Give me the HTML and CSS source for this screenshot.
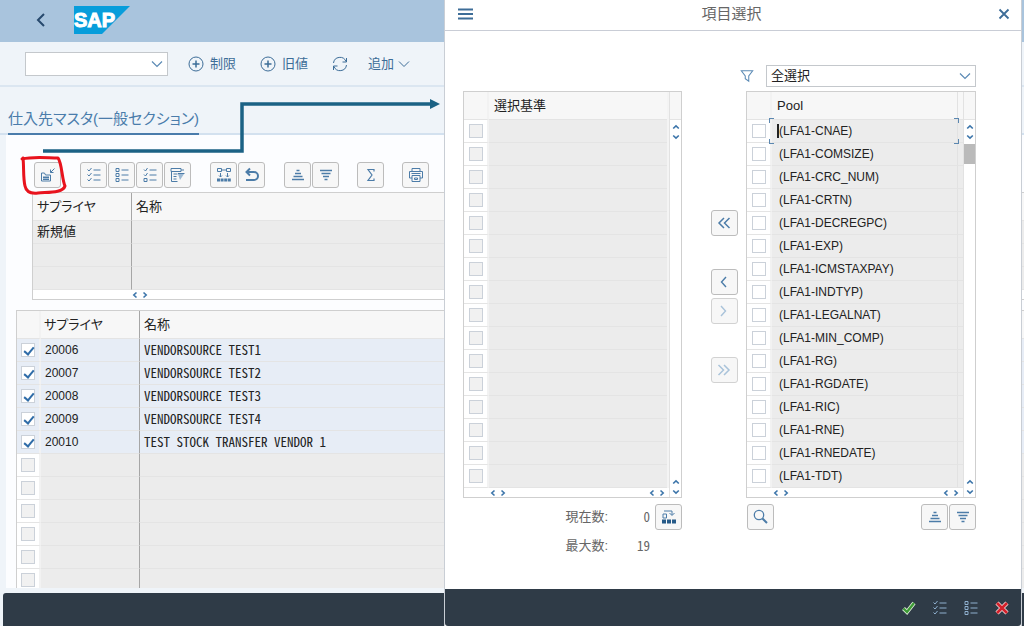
FILE: index.html
```html
<!DOCTYPE html>
<html lang="ja">
<head>
<meta charset="utf-8">
<title>項目選択</title>
<link rel="stylesheet" href="styles.css">
</head>
<body>
<svg class="defs" aria-hidden="true">
  <symbol id="down" viewBox="0 0 12 8"><path d="M1 1.5 6 6.5 11 1.5"/></symbol>
  <symbol id="s-left" viewBox="0 0 6 8"><path d="M4.5 1.5 1.8 4 4.5 6.5" stroke-width="1.6"/></symbol>
  <symbol id="s-right" viewBox="0 0 6 8"><path d="M1.5 1.5 4.2 4 1.5 6.5" stroke-width="1.6"/></symbol>
  <symbol id="s-up" viewBox="0 0 8 6"><path d="M1.2 4.5 4 1.8 6.8 4.5" stroke-width="1.6"/></symbol>
  <symbol id="s-down" viewBox="0 0 8 6"><path d="M1.2 1.5 4 4.2 6.8 1.5" stroke-width="1.6"/></symbol>
  <symbol id="plus" viewBox="0 0 16 16"><circle cx="8" cy="8" r="7"/><path d="M8 4.500v7M4.500 8h7" stroke-width="1.500"/></symbol>
  <symbol id="checks" viewBox="0 0 16 16"><path d="M1.500 2.500 3 4 5.500 1M1.500 7.500 3 9 5.500 6M1.500 12.500 3 14 5.500 11M7.500 3h7M7.500 8h7M7.500 13h7"/></symbol>
  <symbol id="boxes" viewBox="0 0 16 16"><path d="M2 1.500h3v3H2zM2 6.500h3v3H2zM2 11.500h3v3H2zM7.500 3h7M7.500 8h7M7.500 13h7"/></symbol>
  <symbol id="asc" viewBox="0 0 16 16"><path d="M6.500 3.500h3M5 6.500h6M3.500 9.500h9M2 12.500h12" stroke-width="1.500"/></symbol>
  <symbol id="desc" viewBox="0 0 16 16"><path d="M2 3.500h12M3.500 6.500h9M5 9.500h6M6.500 12.500h3" stroke-width="1.500"/></symbol>
</svg>

<div class="app">
  <header class="shell">
    <button class="plain back" aria-label="戻る"><svg class="ic" viewBox="0 0 16 16"><path d="M11 2 5 8 11 14" stroke-width="2"/></svg></button>
    <svg class="logo" viewBox="0 0 56 28" role="img" aria-label="SAP"><path d="M0 0H56L28 28H0Z" fill="#079ddb" stroke="none"/><text x="0" y="21">SAP</text></svg>
  </header>
  <div class="toolbar">
    <select class="cmd" aria-label="コマンド"><option></option></select>
    <button class="plain"><svg class="ic"><use href="#plus"/></svg>制限</button>
    <button class="plain second"><svg class="ic"><use href="#plus"/></svg>旧値</button>
    <button class="plain second" aria-label="更新"><svg class="ic" viewBox="0 0 16 16"><path d="M1.500 7A6.500 6.500 0 0 1 14 5.500M14.500 2v4h-4M14.500 9A6.500 6.500 0 0 1 2 10.500M1.500 14v-4h4"/></svg></button>
    <button class="plain more">追加<svg class="chev"><use href="#down"/></svg></button>
  </div>
  <nav class="tabs"><a class="tab" href="#master">仕入先マスタ(一般セクション)</a></nav>
  <main class="panel" id="master">
    <div class="actions">
      <button class="btn" aria-label="項目選択"><svg class="ic" viewBox="0 0 16 16"><path d="M1.500 6h3l1 2h5v6h-9zM3 10h6M3 12h6"/><path d="M3 10.500h6M3 12.500h6"/><path d="M14.500 1.500 10.500 5.500M10.500 2.500v3h3"/></svg></button>
      <div class="group"><button class="btn" aria-label="全選択"><svg class="ic"><use href="#checks"/></svg></button><button class="btn" aria-label="選択解除"><svg class="ic"><use href="#boxes"/></svg></button><button class="btn" aria-label="ブロック選択"><svg class="ic" viewBox="0 0 16 16"><path d="M2 2.500 3.500 4 5.500 1M2 7.500 3.500 9 5.500 6M2 11.500h3v3H2zM7.500 3h7M7.500 8h7M7.500 13h7"/></svg></button><button class="btn" aria-label="詳細"><svg class="ic" viewBox="0 0 16 16"><path d="M1 1.500h10v3H1zM1.500 4.500v10h6M3.500 7h4M3.500 9.500h3M3.500 12h3M11 3h3"/><path d="M8 7h6l-4 6z" fill="#9db9d3" stroke="none"/><path d="M8 6.500h6.500"/></svg></button></div>
      <div class="group"><button class="btn" aria-label="一括変更"><svg class="ic" viewBox="0 0 16 16"><path d="M1.500 1.500h4v3h-4zM10.500 1.500h4v3h-4zM6 3h4M4.500 6v4M11.500 6v4M3 8.500 4.500 10 6 8.500M10 8.500 11.500 10 13 8.500"/><path d="M1 13h14" stroke-width="3" stroke-dasharray="3 .6"/></svg></button><button class="btn" aria-label="元に戻す"><svg class="ic" viewBox="0 0 16 16"><path d="M6 1.500 2.500 5 6 8.500M3 5h7a4 4 0 0 1 0 8H2" stroke-width="2"/></svg></button></div>
      <div class="group"><button class="btn" aria-label="昇順"><svg class="ic"><use href="#asc"/></svg></button><button class="btn" aria-label="降順"><svg class="ic"><use href="#desc"/></svg></button></div>
      <button class="btn" aria-label="合計"><svg class="ic" viewBox="0 0 16 16"><path d="M11 4.500v-2H5L9 8l-4 5.500h6v-2" stroke-width="1.200"/></svg></button>
      <button class="btn" aria-label="印刷"><svg class="ic" viewBox="0 0 16 16"><path d="M4 4.500v-3h8v3M4 11H1.500V4.500h13V11H12M4 8.500h8v6H4zM3.500 6.500h9M6.500 11h3v1.500h-3z"/></svg></button>
    </div>
    <section class="block">
      <table class="data first">
        <thead><tr><th class="id">サプライヤ</th><th>名称</th></tr></thead>
        <tbody><tr><td class="id">新規値</td><td></td></tr><tr><td class="id"></td><td></td></tr><tr><td class="id"></td><td></td></tr></tbody>
      </table>
      <div class="hbar"><svg class="h"><use href="#s-left"/></svg><svg class="h"><use href="#s-right"/></svg></div>
    </section>
    <table class="data list">
      <thead><tr><th class="ck"></th><th class="id">サプライヤ</th><th>名称</th></tr></thead>
      <tbody>
        <tr class="on"><td class="ck"><input type="checkbox" checked aria-label="20006"></td><td class="id">20006</td><td class="mono">VENDORSOURCE TEST1</td></tr>
        <tr class="on"><td class="ck"><input type="checkbox" checked aria-label="20007"></td><td class="id">20007</td><td class="mono">VENDORSOURCE TEST2</td></tr>
        <tr class="on"><td class="ck"><input type="checkbox" checked aria-label="20008"></td><td class="id">20008</td><td class="mono">VENDORSOURCE TEST3</td></tr>
        <tr class="on"><td class="ck"><input type="checkbox" checked aria-label="20009"></td><td class="id">20009</td><td class="mono">VENDORSOURCE TEST4</td></tr>
        <tr class="on"><td class="ck"><input type="checkbox" checked aria-label="20010"></td><td class="id">20010</td><td class="mono">TEST STOCK TRANSFER VENDOR 1</td></tr>
        <tr><td class="ck"><input type="checkbox" disabled aria-label="空行"></td><td class="id"></td><td></td></tr>
        <tr><td class="ck"><input type="checkbox" disabled aria-label="空行"></td><td class="id"></td><td></td></tr>
        <tr><td class="ck"><input type="checkbox" disabled aria-label="空行"></td><td class="id"></td><td></td></tr>
        <tr><td class="ck"><input type="checkbox" disabled aria-label="空行"></td><td class="id"></td><td></td></tr>
        <tr><td class="ck"><input type="checkbox" disabled aria-label="空行"></td><td class="id"></td><td></td></tr>
        <tr><td class="ck"><input type="checkbox" disabled aria-label="空行"></td><td class="id"></td><td></td></tr>
      </tbody>
    </table>
  </main>
  <footer class="foot"></footer>
  <svg class="notes" viewBox="0 0 444 200" aria-hidden="true">
    <path d="M43 151H242V104H431" fill="none" stroke="#1b6285" stroke-width="3.500"/><path d="M430 99 440 104 430 109Z" fill="#1b6285"/>
    <path d="M22 159C34 156 48 158 58 158C62 163 62 180 65 186C63 193 48 192 38 193C30 194 26 191 25 186C23 178 24 166 23 158" fill="none" stroke="#e8131d" stroke-width="3" stroke-linecap="round" stroke-linejoin="round"/>
  </svg>
</div>

<div class="dialog" role="dialog" aria-labelledby="ttl">
  <header class="dhead">
    <button class="plain" aria-label="メニュー"><svg class="ic" viewBox="0 0 16 16"><path d="M1 3.500h15M1 8h15M1 12.500h15" stroke-width="1.800"/></svg></button>
    <h1 id="ttl">項目選択</h1>
    <button class="plain" aria-label="閉じる"><svg class="ic" viewBox="0 0 16 16"><path d="M3.500 3.500l9 9M12.500 3.500l-9 9" stroke-width="1.800"/></svg></button>
  </header>
  <div class="dbody">
    <section class="chosen">
      <div class="grid">
        <table class="data">
          <thead><tr><th class="ck"></th><th>選択基準</th></tr></thead>
          <tbody>
            <tr><td class="ck"><input type="checkbox" disabled aria-label="行1"></td><td></td></tr>
            <tr><td class="ck"><input type="checkbox" disabled aria-label="行2"></td><td></td></tr>
            <tr><td class="ck"><input type="checkbox" disabled aria-label="行3"></td><td></td></tr>
            <tr><td class="ck"><input type="checkbox" disabled aria-label="行4"></td><td></td></tr>
            <tr><td class="ck"><input type="checkbox" disabled aria-label="行5"></td><td></td></tr>
            <tr><td class="ck"><input type="checkbox" disabled aria-label="行6"></td><td></td></tr>
            <tr><td class="ck"><input type="checkbox" disabled aria-label="行7"></td><td></td></tr>
            <tr><td class="ck"><input type="checkbox" disabled aria-label="行8"></td><td></td></tr>
            <tr><td class="ck"><input type="checkbox" disabled aria-label="行9"></td><td></td></tr>
            <tr><td class="ck"><input type="checkbox" disabled aria-label="行10"></td><td></td></tr>
            <tr><td class="ck"><input type="checkbox" disabled aria-label="行11"></td><td></td></tr>
            <tr><td class="ck"><input type="checkbox" disabled aria-label="行12"></td><td></td></tr>
            <tr><td class="ck"><input type="checkbox" disabled aria-label="行13"></td><td></td></tr>
            <tr><td class="ck"><input type="checkbox" disabled aria-label="行14"></td><td></td></tr>
            <tr><td class="ck"><input type="checkbox" disabled aria-label="行15"></td><td></td></tr>
            <tr><td class="ck"><input type="checkbox" disabled aria-label="行16"></td><td></td></tr>
          </tbody>
        </table>
        <div class="vbar"><svg class="v"><use href="#s-up"/></svg><svg class="v"><use href="#s-down"/></svg><svg class="v end"><use href="#s-up"/></svg><svg class="v"><use href="#s-down"/></svg></div>
        <div class="hbar"><svg class="h"><use href="#s-left"/></svg><svg class="h"><use href="#s-right"/></svg><svg class="h end"><use href="#s-left"/></svg><svg class="h"><use href="#s-right"/></svg></div>
      </div>
      <dl class="counts">
        <dt>現在数:</dt><dd>0</dd><dd><button class="btn" aria-label="集計"><svg class="ic" viewBox="0 0 16 16"><path d="M2 5h3.500v4H2zM3 2h8v4M8.500 4 11 6.500 13.500 4"/><path d="M1 12.500h4M6 12.500h4M11 12.500h4" stroke-width="4" stroke="#265a88"/></svg></button></dd>
        <dt>最大数:</dt><dd>19</dd>
      </dl>
    </section>
    <div class="moves">
      <button class="btn" aria-label="すべて追加"><svg class="ic" viewBox="0 0 16 16"><path d="M7 3 2 8l5 5M12.500 3l-5 5 5 5" stroke-width="1.500"/></svg></button>
      <button class="btn one" aria-label="追加"><svg class="ic" viewBox="0 0 16 16"><path d="M9 3 4.500 8 9 13" stroke-width="1.400"/></svg></button>
      <button class="btn" disabled aria-label="削除"><svg class="ic" viewBox="0 0 16 16"><path d="M4 3l4.500 5L4 13" stroke-width="1.400"/></svg></button>
      <button class="btn all" disabled aria-label="すべて削除"><svg class="ic" viewBox="0 0 16 16"><path d="M1.500 3l5 5-5 5M7 3l5 5-5 5" stroke-width="1.500"/></svg></button>
    </div>
    <section class="pool">
      <div class="filter">
        <svg class="ic" viewBox="0 0 16 16"><path d="M1.500 2h13L10 8v6l-4-3V8z" stroke-width="1.200"/></svg>
        <select aria-label="フィルタ"><option>全選択</option></select>
      </div>
      <div class="grid">
        <table class="data">
          <thead><tr><th class="ck"></th><th>Pool</th><th class="edge"></th></tr></thead>
          <tbody>
            <tr><td class="ck"><input type="checkbox" id="p1"></td><td class="focus"><label for="p1">(LFA1-CNAE)</label></td><td class="edge"></td></tr>
            <tr><td class="ck"><input type="checkbox" id="p2"></td><td><label for="p2">(LFA1-COMSIZE)</label></td><td class="edge"></td></tr>
            <tr><td class="ck"><input type="checkbox" id="p3"></td><td><label for="p3">(LFA1-CRC_NUM)</label></td><td class="edge"></td></tr>
            <tr><td class="ck"><input type="checkbox" id="p4"></td><td><label for="p4">(LFA1-CRTN)</label></td><td class="edge"></td></tr>
            <tr><td class="ck"><input type="checkbox" id="p5"></td><td><label for="p5">(LFA1-DECREGPC)</label></td><td class="edge"></td></tr>
            <tr><td class="ck"><input type="checkbox" id="p6"></td><td><label for="p6">(LFA1-EXP)</label></td><td class="edge"></td></tr>
            <tr><td class="ck"><input type="checkbox" id="p7"></td><td><label for="p7">(LFA1-ICMSTAXPAY)</label></td><td class="edge"></td></tr>
            <tr><td class="ck"><input type="checkbox" id="p8"></td><td><label for="p8">(LFA1-INDTYP)</label></td><td class="edge"></td></tr>
            <tr><td class="ck"><input type="checkbox" id="p9"></td><td><label for="p9">(LFA1-LEGALNAT)</label></td><td class="edge"></td></tr>
            <tr><td class="ck"><input type="checkbox" id="p10"></td><td><label for="p10">(LFA1-MIN_COMP)</label></td><td class="edge"></td></tr>
            <tr><td class="ck"><input type="checkbox" id="p11"></td><td><label for="p11">(LFA1-RG)</label></td><td class="edge"></td></tr>
            <tr><td class="ck"><input type="checkbox" id="p12"></td><td><label for="p12">(LFA1-RGDATE)</label></td><td class="edge"></td></tr>
            <tr><td class="ck"><input type="checkbox" id="p13"></td><td><label for="p13">(LFA1-RIC)</label></td><td class="edge"></td></tr>
            <tr><td class="ck"><input type="checkbox" id="p14"></td><td><label for="p14">(LFA1-RNE)</label></td><td class="edge"></td></tr>
            <tr><td class="ck"><input type="checkbox" id="p15"></td><td><label for="p15">(LFA1-RNEDATE)</label></td><td class="edge"></td></tr>
            <tr><td class="ck"><input type="checkbox" id="p16"></td><td><label for="p16">(LFA1-TDT)</label></td><td class="edge"></td></tr>
          </tbody>
        </table>
        <div class="vbar"><svg class="v"><use href="#s-up"/></svg><svg class="v"><use href="#s-down"/></svg><span class="thumb"></span><svg class="v end"><use href="#s-up"/></svg><svg class="v"><use href="#s-down"/></svg></div>
        <div class="hbar"><svg class="h"><use href="#s-left"/></svg><svg class="h"><use href="#s-right"/></svg><svg class="h end"><use href="#s-left"/></svg><svg class="h"><use href="#s-right"/></svg></div>
      </div>
      <div class="tools">
        <button class="btn" aria-label="検索"><svg class="ic" viewBox="0 0 16 16"><circle cx="6" cy="6" r="4.700" stroke-width="1.300"/><path d="M9.500 9.500l4.500 4.500" stroke-width="2"/></svg></button>
        <div class="group"><button class="btn" aria-label="昇順"><svg class="ic"><use href="#asc"/></svg></button><button class="btn" aria-label="降順"><svg class="ic"><use href="#desc"/></svg></button></div>
      </div>
    </section>
  </div>
  <footer class="dfoot">
    <button class="plain" aria-label="確定"><svg class="ic" viewBox="0 0 16 16"><path d="M2.500 8.500 6 12 13 3" stroke="#dfeed9" stroke-width="4"/><path d="M2.500 8.500 6 12 13 3" stroke="#3c9a35" stroke-width="2.400"/></svg></button>
    <button class="plain" aria-label="全選択"><svg class="ic"><use href="#checks"/></svg></button>
    <button class="plain" aria-label="選択解除"><svg class="ic"><use href="#boxes"/></svg></button>
    <button class="plain" aria-label="中止"><svg class="ic" viewBox="0 0 16 16"><path d="M3 3l10 10M13 3 3 13" stroke="#f3dada" stroke-width="4.400"/><path d="M3 3l10 10M13 3 3 13" stroke="#d3202a" stroke-width="2.800"/></svg></button>
  </footer>
</div>
</body>
</html>
```
FILE: styles.css
```css
* { box-sizing: border-box; }
html, body { height: 100%; }
body {
  margin: 0;
  position: relative;
  overflow: hidden;
  background: #eff4f9;
  color: #333;
  font: 13px/20px "Liberation Sans", "Noto Sans CJK JP", sans-serif;
  font-feature-settings: "palt";
}
button, select { font: inherit; font-feature-settings: inherit; color: inherit; }
.defs { position: absolute; width: 0; height: 0; }
svg { fill: none; stroke: currentColor; flex: none; display: block; }
.ic { width: 16px; height: 16px; }
.plain {
  display: flex; align-items: center; gap: 6px;
  padding: 0; border: 0; background: none; color: #3d6d98;
  white-space: nowrap;
}
.btn {
  display: flex; align-items: center; justify-content: center;
  width: 27px; height: 26px; padding: 0;
  border: 1px solid #bcbcbc; border-radius: 3px;
  background: #f7f7f7; color: #4c7ca8;
}
.btn:disabled { border-color: #d2d2d2; color: #a9c3da; }
.group { display: flex; gap: 1px; }

/* Main window */
.app { height: 100%; display: flex; flex-direction: column; position: relative; }
.shell {
  display: flex; align-items: center; gap: 25px;
  height: 42px; padding: 0 33px 3px; flex: none;
  background: #a9c4dd;
}
.back { color: #27496d; }
.logo { width: 56px; height: 28px; }
.logo text { font: bold 20px "Liberation Sans", sans-serif; fill: #fff; stroke: #fff; stroke-width: 1px; }
.toolbar {
  display: flex; align-items: center; gap: 20px;
  height: 45px; padding: 0 25px; flex: none;
  border-bottom: 2px solid #dbe6f1;
}
.second { margin-left: 4px; }
.more { gap: 4px; }
.chev { width: 12px; height: 8px; }
select {
  appearance: none; border: 1px solid #c4c8cc; border-radius: 0;
  padding: 0 20px 0 4px; color: #222;
  background: #fff url("data:image/svg+xml,%3Csvg xmlns='http://www.w3.org/2000/svg' width='12' height='8'%3E%3Cpath d='M1 1.500 6 6.500 11 1.500' fill='none' stroke='%235b8ab5' stroke-width='1.200'/%3E%3C/svg%3E") no-repeat right 4px center;
}
.cmd { width: 143px; height: 24px; }
.tabs {
  display: flex; align-items: flex-end; flex: none;
  height: 48px; padding-left: 8px;
  box-shadow: inset 0 -2px #d3e1ef;
}
.tab {
  padding-bottom: 3px; border-bottom: 2px solid #4a7cab;
  color: #4a7cab; font-size: 15px; line-height: 22px; text-decoration: none;
}
.panel {
  flex: 1; min-height: 0; overflow: hidden;
  margin-left: 6px; padding: 27px 0 0 10px; background: #fcfdff;
}
.actions { display: flex; gap: 18px; padding-left: 18px; }
.actions .group { padding-left: 1px; }
.block { margin: 4px 0 10px 16px; border: 1px solid #cfcfcf; border-right: 0; background: #fff; }

.data { width: 100%; border-collapse: separate; border-spacing: 0; table-layout: fixed; }
.data th {
  height: 28px; padding: 0 4px; text-align: left; font-weight: 400;
  background: #f7f7f7; color: #222; border-bottom: 1px solid #e4e4e4;
}
.data td {
  height: 23px; padding: 0 4px; line-height: 18px;
  background: #ececec; border-bottom: 1px solid #e4e4e4; color: #222;
}
.app .id { width: 99px; border-right: 1px solid #a6a6a6; }
.list { border: 1px solid #cfcfcf; border-right: 0; border-bottom: 0; }
.list .id { font-size: 12px; }
.list th.id { font-size: 13px; padding-left: 3px; }
.data .ck { width: 24px; padding: 0 0 0 4px; border-right: 2px solid #f2f2f2; }
.data td.ck { background: #fff; }
.data .on td { background: #e7edf6; }
.mono { font-family: "Noto Sans CJK JP", sans-serif; font-feature-settings: "hwid"; }
input[type="checkbox"] {
  appearance: none; display: block; position: relative;
  width: 14px; height: 14px; margin: 0;
  border: 1px solid #cbd1d9; background: #fff;
}
input:disabled { background: #f1f1f1; }
input:checked::after {
  content: ""; position: absolute; left: 4px; top: 1px;
  width: 4px; height: 8px; transform: rotate(40deg);
  border: solid #2f6ca8; border-width: 0 2px 2px 0;
}
.hbar { display: flex; align-items: center; gap: 4px; height: 9px; padding-left: 99px; color: #3c75aa; }
.h { width: 6px; height: 8px; }
.v { width: 8px; height: 6px; }
.foot { flex: none; height: 33px; margin: 5px 0 0 3px; background: #2f3b47; border-top-left-radius: 3px; }
.notes { position: absolute; left: 0; top: 0; width: 444px; height: 200px; pointer-events: none; stroke: none; }

/* Field selection dialog */
.dialog {
  position: absolute; left: 444px; right: 2px; top: 0; bottom: 0;
  display: flex; flex-direction: column;
  background: #fff; border: solid #c9ced5; border-width: 0 1px;
}
.dhead {
  display: flex; align-items: center; justify-content: space-between; flex: none;
  height: 31px; padding: 0 9px 3px 12px; border-bottom: 1px solid #c9cdd6;
}
.dhead h1 { margin: 0; padding-right: 6px; font-size: 15px; line-height: 20px; font-weight: 400; color: #666; }
.dbody {
  flex: 1; min-height: 0; display: grid;
  grid-template-columns: minmax(0, 219fr) 64px minmax(0, 230fr);
  padding: 34px 45px 0 18px; align-items: start;
}
.chosen { padding-top: 26px; }
.grid {
  display: grid; grid-template-columns: minmax(0, 1fr) 12px; grid-template-rows: auto 9px;
  border: 1px solid #cfcfcf;
}
.grid .data th { padding-left: 5px; }
.grid .data td { padding-left: 7px; font-size: 12px; }
.grid .data .ck { padding: 0 0 0 5px; width: 25px; }
.chosen .data { border-right: 2px solid #f4f4f4; }
.grid .hbar { grid-column: 1; padding: 0 4px 0 26px; }
.hbar .end { margin-left: auto; }
.vbar {
  grid-column: 2; grid-row: 1 / 3; border-left: 1px solid #e2e2e2;
  display: flex; flex-direction: column; align-items: center; gap: 4px;
  padding: 32px 0 2px;
  background: linear-gradient(#f7f7f7 27px, #e4e4e4 27px 28px, #fff 28px);
  color: #3c75aa;
}
.vbar .end { margin-top: auto; }
.thumb { width: 100%; height: 20px; background: #bababa; }
.data .edge { width: 5px; padding: 0; border-left: 1px solid #e2e2e2; }
.focus { position: relative; }
.focus label { border-left: 2px solid #222; margin-left: -2px; }
.focus::after {
  content: ""; position: absolute; inset: -2px -2px -2px -3px; pointer-events: none;
  --c: linear-gradient(#5b87b0, #5b87b0);
  background:
    var(--c) 0 0 / 5px 1px, var(--c) 0 0 / 1px 5px,
    var(--c) 100% 0 / 5px 1px, var(--c) 100% 0 / 1px 5px,
    var(--c) 0 100% / 5px 1px, var(--c) 0 100% / 1px 5px,
    var(--c) 100% 100% / 5px 1px, var(--c) 100% 100% / 1px 5px;
  background-repeat: no-repeat;
}
.counts {
  display: grid; grid-template-columns: auto 47px 27px; justify-content: end;
  grid-template-rows: 26px 20px; row-gap: 6px;
  align-items: center; margin: 6px 0 0; color: #666;
}
.counts dd {
  margin: 0; padding-right: 5px; text-align: right;
  font-family: "Noto Sans CJK JP", sans-serif; font-feature-settings: "hwid";
}
.counts dd:nth-child(3) { padding: 0; }
.moves { padding: 145px 8px 0 0; justify-self: end; }
.moves .one { margin: 33px 0 3px; }
.moves .all { margin-top: 33px; }
.filter {
  display: grid; grid-template-columns: 14px minmax(0, 1fr); gap: 12px;
  margin: 0 0 4px -6px; align-items: center; color: #5b8ab5;
}
.filter select { height: 22px; }
.filter .ic { width: 14px; height: 14px; }
.tools { display: flex; justify-content: space-between; padding: 6px 0 0 1px; }
.dfoot {
  display: flex; align-items: center; justify-content: flex-end; gap: 15px; flex: none;
  height: 37px; padding-right: 11px; background: #2f3b47; border-radius: 0 0 3px 3px;
}
.dfoot .plain { color: #8fb0cf; }
```
